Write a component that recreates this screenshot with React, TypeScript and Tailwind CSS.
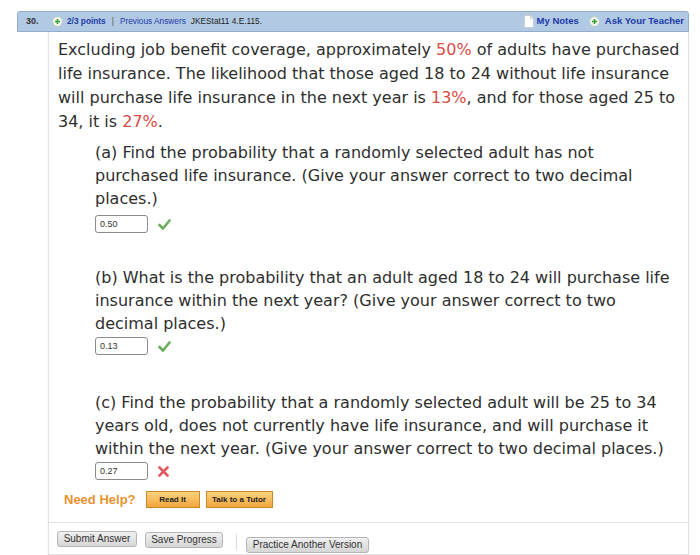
import React from 'react';

function PlusIcon() {
  return (
    <svg width="11" height="11" viewBox="0 0 12 12" className="shrink-0">
      <circle cx="6" cy="6" r="5.3" fill="#f1f7ee" stroke="#b9cdb4" strokeWidth="0.8" />
      <path d="M6 3.2v5.6M3.2 6h5.6" stroke="#3f9a3a" strokeWidth="1.8" />
    </svg>
  );
}

function NoteIcon() {
  return (
    <svg width="10" height="13" viewBox="0 0 10 13" className="shrink-0">
      <path d="M0.5 0.5h6l3 3v9h-9z" fill="#fff" stroke="#c8c8c8" strokeWidth="0.8" />
      <path d="M6.5 0.5v3h3" fill="#eee" stroke="#c8c8c8" strokeWidth="0.8" />
    </svg>
  );
}

function Check() {
  return (
    <svg width="13" height="11" viewBox="0 0 13 11">
      <path d="M1.5 6l3.5 3.5L11.5 1.5" fill="none" stroke="#6aae5e" strokeWidth="2.6" strokeLinecap="round" strokeLinejoin="round" />
    </svg>
  );
}

function Cross() {
  return (
    <svg width="11" height="11" viewBox="0 0 11 11">
      <path d="M1.5 1.5l8 8M9.5 1.5l-8 8" stroke="#e25a5a" strokeWidth="2.6" strokeLinecap="round" />
    </svg>
  );
}

function Answer({ value, ok }: { value: string; ok: boolean }) {
  return (
    <div className="flex items-center gap-[10px]">
      <div className="w-[53px] h-[18px] border border-[#8a8a8a] rounded-[3px] bg-white flex items-center px-[4px] text-[9px] text-[#333] font-['Liberation_Sans',sans-serif]">
        {value}
      </div>
      {ok ? <Check /> : <Cross />}
    </div>
  );
}

export default function App() {
  const red = 'text-[#dc4a44]';
  return (
    <div className="w-[700px] h-[555px] bg-white overflow-hidden font-['DejaVu_Sans',Verdana,sans-serif] text-[#2e2e2e]">
      <div className="ml-[17px] mt-[11px] w-[672px]">
        {/* Header bar */}
        <div className="h-[21px] bg-[#b1c9e3] border border-[#93aecd] rounded-t-[3px] flex items-center justify-between pl-[8px] pr-[4px] font-bold font-['Liberation_Sans',Arial,sans-serif]">
          <div className="flex items-center text-[8.3px]">
            <span className="text-[#333] w-[26px] text-[9px]">30.</span>
            <PlusIcon />
            <span className="text-[#2039a8] ml-[4px]">2/3 points</span>
            <span className="text-[#555] font-normal mx-[6px]">|</span>
            <span className="text-[#2039a8] font-normal">Previous Answers</span>
            <span className="text-[#222] font-normal ml-[5px]">JKEStat11 4.E.115.</span>
          </div>
          <div className="flex items-center text-[9.5px]">
            <NoteIcon />
            <span className="text-[#2039a8] ml-[3px]">My Notes</span>
            <span className="ml-[10px]"><PlusIcon /></span>
            <span className="text-[#2039a8] ml-[5px]">Ask Your Teacher</span>
          </div>
        </div>

        {/* Question panel */}
        <div className="ml-[31px] border-l border-r border-b border-[#e2e2e2] shadow-[0_1px_2px_rgba(0,0,0,0.08)]">
          <div className="pl-[9px] pr-[4px] pt-[6px] text-[16px] leading-[24px] whitespace-nowrap">
            <p>
              Excluding job benefit coverage, approximately <span className={red}>50%</span> of adults have purchased
              <br />
              life insurance. The likelihood that those aged 18 to 24 without life insurance
              <br />
              will purchase life insurance in the next year is <span className={red}>13%</span>, and for those aged 25 to
              <br />
              34, it is <span className={red}>27%</span>.
            </p>

            <div className="pl-[37px]">
              <p className="mt-[7px] leading-[23px]">
                (a) Find the probability that a randomly selected adult has not
                <br />
                purchased life insurance. (Give your answer correct to two decimal
                <br />
                places.)
              </p>
              <div className="mt-[5px]">
                <Answer value="0.50" ok />
              </div>

              <p className="mt-[33px] leading-[23px]">
                (b) What is the probability that an adult aged 18 to 24 will purchase life
                <br />
                insurance within the next year? (Give your answer correct to two
                <br />
                decimal places.)
              </p>
              <div className="mt-[2px]">
                <Answer value="0.13" ok />
              </div>

              <p className="mt-[36px] leading-[23px]">
                (c) Find the probability that a randomly selected adult will be 25 to 34
                <br />
                years old, does not currently have life insurance, and will purchase it
                <br />
                within the next year. (Give your answer correct to two decimal places.)
              </p>
              <div className="mt-[2px]">
                <Answer value="0.27" ok={false} />
              </div>
            </div>

            <div className="flex items-center mt-[11px] pl-[6px] pb-[14px] font-['Liberation_Sans',Arial,sans-serif]">
              <span className="text-[13px] font-bold text-[#e8922e] leading-[17px]">Need Help?</span>
              <button className="ml-[10px] w-[54px] h-[17px] border border-[#c98a2c] bg-gradient-to-b from-[#fbd27c] to-[#f2a63a] text-[8px] font-bold text-[#222] leading-none">
                Read It
              </button>
              <button className="ml-[6px] w-[67px] h-[17px] border border-[#c98a2c] bg-gradient-to-b from-[#fbd27c] to-[#f2a63a] text-[8px] font-bold text-[#222] leading-none">
                Talk to a Tutor
              </button>
            </div>
          </div>

          <div className="border-t border-[#e2e2e2] flex items-start pl-[8px] pt-[8px] pb-[1px] gap-[8px] font-['Liberation_Sans',Arial,sans-serif] text-[10px] text-[#333]">
            <button className="w-[80px] h-[16px] rounded-[3px] border border-[#b5b5b5] bg-gradient-to-b from-[#f1f1f1] to-[#d6d6d6] leading-none">
              Submit Answer
            </button>
            <button className="w-[78px] h-[16px] mt-[1px] rounded-[3px] border border-[#b5b5b5] bg-gradient-to-b from-[#f1f1f1] to-[#d6d6d6] leading-none">
              Save Progress
            </button>
            <div className="w-px h-[16px] bg-[#d8d8d8] ml-[5px] mt-[3px]" />
            <button className="ml-[1px] mt-[6px] w-[123px] h-[16px] rounded-[3px] border border-[#b5b5b5] bg-gradient-to-b from-[#f1f1f1] to-[#d6d6d6] leading-none">
              Practice Another Version
            </button>
          </div>
        </div>
      </div>
    </div>
  );
}
